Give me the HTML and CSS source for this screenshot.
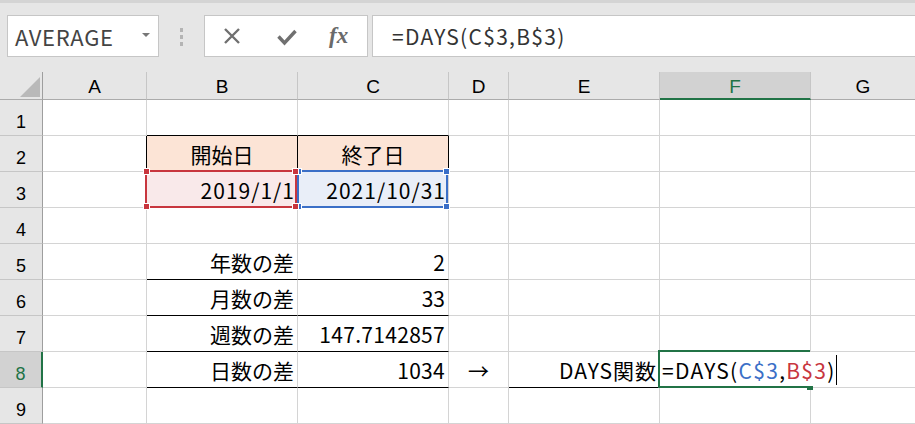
FILE: index.html
```html
<!DOCTYPE html>
<html lang="ja">
<head>
<meta charset="UTF-8">
<title>DAYS関数</title>
<link rel="stylesheet" href="styles.css">
</head>
<body>

<!-- FORMULA BAR -->
<div class="toolbar">
    <div class="namebox">
        <span>AVERAGE</span>
        <svg class="drop" width="8" height="4" viewBox="0 0 8 4"><path d="M0 0 L8 0 L4 4 Z" fill="#777"/></svg>
    </div>
    <div class="grip"><i></i><i></i><i></i></div>
    <div class="fxbox">
        <svg class="ico-x" width="18" height="16" viewBox="0 0 18 16"><path d="M2 1 L16 15 M16 1 L2 15" stroke="#707070" stroke-width="2.4" fill="none"/></svg>
        <svg class="ico-ok" width="20" height="17" viewBox="0 0 20 17"><path d="M1.5 7.5 L7.5 14 L18.5 2" stroke="#707070" stroke-width="3.4" fill="none"/></svg>
        <span class="fx">fx</span>
    </div>
    <div class="formula">=DAYS(C$3,B$3)</div>
</div>

<!-- SHEET -->
<div class="sheet">
    <div class="corner"><i class="tri"></i></div>
    <div class="hd">A</div>
    <div class="hd">B</div>
    <div class="hd">C</div>
    <div class="hd">D</div>
    <div class="hd">E</div>
    <div class="hd sel">F</div>
    <div class="hd">G</div>

    <!-- row 1 -->
    <div class="rh">1</div>
    <div class="c"></div>
    <div class="c bb"></div>
    <div class="c bb"></div>
    <div class="c"></div>
    <div class="c"></div>
    <div class="c"></div>
    <div class="c"></div>

    <!-- row 2 -->
    <div class="rh">2</div>
    <div class="c br"></div>
    <div class="c peach mid br">開始日</div>
    <div class="c peach mid br">終了日</div>
    <div class="c"></div>
    <div class="c"></div>
    <div class="c"></div>
    <div class="c"></div>

    <!-- row 3 -->
    <div class="rh">3</div>
    <div class="c"></div>
    <div class="c right pink wide">2019/1/1<i class="frame red"><b class="tl"></b><b class="tr"></b><b class="bl"></b><b class="br"></b></i></div>
    <div class="c right blue wide">2021/10/31<i class="frame navy"><b class="tl"></b><b class="tr"></b><b class="bl"></b><b class="br"></b></i></div>
    <div class="c"></div>
    <div class="c"></div>
    <div class="c"></div>
    <div class="c"></div>

    <!-- row 4 -->
    <div class="rh">4</div>
    <div class="c"></div>
    <div class="c"></div>
    <div class="c"></div>
    <div class="c"></div>
    <div class="c"></div>
    <div class="c"></div>
    <div class="c"></div>

    <!-- row 5 -->
    <div class="rh">5</div>
    <div class="c"></div>
    <div class="c right bb">年数の差</div>
    <div class="c right bb">2</div>
    <div class="c"></div>
    <div class="c"></div>
    <div class="c"></div>
    <div class="c"></div>

    <!-- row 6 -->
    <div class="rh">6</div>
    <div class="c"></div>
    <div class="c right bb">月数の差</div>
    <div class="c right bb">33</div>
    <div class="c"></div>
    <div class="c"></div>
    <div class="c"></div>
    <div class="c"></div>

    <!-- row 7 -->
    <div class="rh">7</div>
    <div class="c"></div>
    <div class="c right bb">週数の差</div>
    <div class="c right bb num">147.7142857</div>
    <div class="c"></div>
    <div class="c"></div>
    <div class="c"></div>
    <div class="c"></div>

    <!-- row 8 -->
    <div class="rh sel">8</div>
    <div class="c"></div>
    <div class="c right bb">日数の差</div>
    <div class="c right bb num">1034</div>
    <div class="c mid">→</div>
    <div class="c right bb wide">DAYS関数</div>
    <div class="c active">
        <span class="edit">=DAYS(<span class="ref-c">C$3</span>,<span class="ref-b">B$3</span>)<i class="caret"></i></span>
        <i class="handle"></i>
    </div>
    <div class="c"></div>

    <!-- row 9 -->
    <div class="rh">9</div>
    <div class="c"></div>
    <div class="c"></div>
    <div class="c"></div>
    <div class="c"></div>
    <div class="c"></div>
    <div class="c"></div>
    <div class="c"></div>
</div>

</body>
</html>
```

FILE: styles.css
```css
* {
    margin: 0;
    padding: 0;
    box-sizing: border-box;
}

html, body {
    width: 915px;
    height: 424px;
    overflow: hidden;
    background: #e6e6e6;
    font-family: "Noto Sans CJK JP", sans-serif;
    color: #000;
}

/* =======================
     FORMULA BAR
======================== */
.toolbar {
    height: 72px;
    border-top: 3px solid #d4d4d4;
    padding: 12px 0 0 7px;
    display: flex;
    align-items: flex-start;
}

.namebox {
    width: 152px;
    height: 42px;
    background: #fff;
    border: 1px solid #c6c6c6;
    display: flex;
    align-items: center;
    justify-content: space-between;
    padding: 0 8px 0 7px;
    font-size: 22px;
    letter-spacing: 0.7px;
    color: #444;
}

.drop {
    margin-top: -2px;
}

.grip {
    width: 45px;
    display: flex;
    flex-direction: column;
    align-items: center;
    gap: 3px;
    padding-top: 13px;
}

.grip i {
    width: 3px;
    height: 4px;
    background: #b4b4b4;
}

.fxbox {
    width: 164px;
    height: 42px;
    background: #fff;
    border: 1px solid #c6c6c6;
    display: flex;
    align-items: center;
    padding-left: 18px;
}

.ico-ok {
    margin-left: 36px;
    margin-top: 2px;
}

.fx {
    margin-left: 32px;
    font-family: "Liberation Serif", serif;
    font-style: italic;
    font-weight: bold;
    font-size: 23px;
    color: #6a6a6a;
}

.formula {
    flex: 1;
    height: 42px;
    margin-left: 4px;
    background: #fff;
    border: 1px solid #c6c6c6;
    border-right: none;
    padding-left: 19px;
    display: flex;
    align-items: center;
    font-size: 21px;
    letter-spacing: 1.3px;
    color: #333;
}

/* =======================
     SHEET GRID
======================== */
.sheet {
    display: grid;
    grid-template-columns: 43px 104px 151px 151px 60px 151px 151px 104px;
    grid-template-rows: 28px repeat(9, 36px);
    background: #fff;
}

.sheet > :nth-child(8n) {
    border-right: none;
}

.corner {
    background: #e6e6e6;
    border-right: 1px solid #9e9e9e;
    border-bottom: 1px solid #ababab;
    display: flex;
    align-items: flex-end;
    justify-content: flex-end;
    padding: 0 2px 2px 0;
}

.tri {
    width: 20px;
    height: 20px;
    background: #b9b9b9;
    clip-path: polygon(100% 0, 100% 100%, 0 100%);
}

.hd {
    background: #e6e6e6;
    border-right: 1px solid #c6c6c6;
    border-bottom: 1px solid #ababab;
    display: flex;
    align-items: center;
    justify-content: center;
    padding-top: 3px;
    font-family: "Liberation Sans", Arial, sans-serif;
    font-size: 19px;
}

.hd.sel {
    background: #d2d2d2;
    border-bottom: 2px solid #217346;
    color: #217346;
}

.rh {
    background: #e6e6e6;
    border-right: 1px solid #9e9e9e;
    border-bottom: 1px solid #c6c6c6;
    display: flex;
    align-items: center;
    justify-content: center;
    padding-top: 10px;
    font-family: "Liberation Sans", Arial, sans-serif;
    font-size: 18px;
}

.rh.sel {
    background: #d2d2d2;
    border-right: 2px solid #217346;
    color: #217346;
}

.c {
    border-right: 1px solid #d4d4d4;
    border-bottom: 1px solid #d4d4d4;
    display: flex;
    align-items: center;
    padding: 0 3px;
    font-size: 21px;
    white-space: nowrap;
}

.c.right { justify-content: flex-end; }
.c.mid { justify-content: center; }
.c.bb { border-bottom-color: #000; }
.c.br { border-right-color: #000; }
.c.wide { letter-spacing: 1px; padding-right: 2px; }
.c.num { letter-spacing: 0.3px; padding-right: 3px; }

.peach { background: #fce4d6; }
.pink { background: #f9e9ea; position: relative; }
.blue { background: #e9eef8; position: relative; }

/* =======================
     REFERENCE FRAMES
======================== */
.frame {
    position: absolute;
    top: -2px;
    bottom: -1px;
    border: 2px solid;
}

.frame.red {
    left: -2px;
    right: 0;
    border-color: #c8363e;
    z-index: 2;
}

.frame.navy {
    left: -1px;
    right: 0;
    border-color: #3b6fc7;
    z-index: 1;
}

.frame b {
    position: absolute;
    width: 7px;
    height: 7px;
    border: 1px solid #fff;
}

.frame.red b { background: #c8363e; }
.frame.navy b { background: #3b6fc7; }

.frame .tl { left: -4px; top: -4px; }
.frame .tr { right: -4px; top: -4px; }
.frame .bl { left: -4px; bottom: -4px; }
.frame .br { right: -4px; bottom: -4px; }

/* =======================
     ACTIVE CELL (EDIT)
======================== */
.c.active {
    position: relative;
    z-index: 3;
    padding: 0 0 0 2px;
    overflow: visible;
    letter-spacing: 1.3px;
}

.c.active::before {
    content: "";
    position: absolute;
    left: -2px;
    top: -2px;
    right: 0;
    bottom: -1px;
    border: 2px solid #217346;
    border-right: none;
    z-index: 1;
}

.edit {
    height: 100%;
    display: flex;
    align-items: center;
    background: #fff;
}

.ref-c { color: #3b6fc7; }
.ref-b { color: #c8363e; }

.caret {
    width: 1px;
    height: 30px;
    background: #000;
}

.handle {
    position: absolute;
    left: 147px;
    top: 34px;
    width: 6px;
    height: 4px;
    background: #217346;
    z-index: 2;
}
```
